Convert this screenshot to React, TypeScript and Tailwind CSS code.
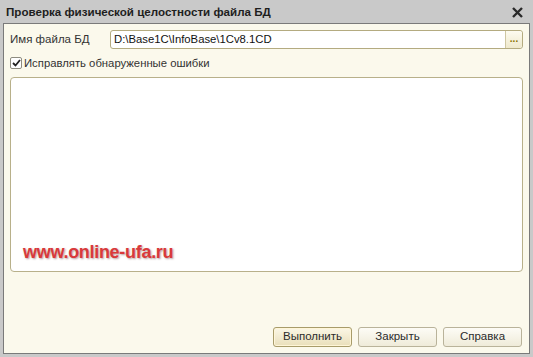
const font = { fontFamily: '"Liberation Sans", Arial, sans-serif' };

function Button({ label, bold }: { label: string; bold?: boolean }) {
  return (
    <button
      type="button"
      className={
        "flex h-[20px] w-[79px] items-center justify-center rounded-[3px] border text-[11.5px] text-[#2b2b2b] " +
        (bold
          ? "border-[#a89c6a] bg-gradient-to-b from-[#fbf7e6] to-[#e9dfba] shadow-[inset_0_0_0_1px_#fff6d8]"
          : "border-[#b9b39a] bg-gradient-to-b from-[#fdfcf6] to-[#efebd9]")
      }
    >
      {label}
    </button>
  );
}

export default function App() {
  return (
    <div
      style={font}
      className="flex h-[357px] w-[533px] flex-col bg-[#c9c9c9] px-[3px] pb-[3px]"
    >
      {/* Title bar */}
      <div className="flex h-[23px] shrink-0 items-center justify-between pl-[3px] pr-[6px]">
        <span className="text-[11.6px] font-bold text-[#1e1e1e]">
          Проверка физической целостности файла БД
        </span>
        <svg width="13" height="13" viewBox="0 0 13 13" className="mt-[1px]">
          <path d="M2 2 L11 11 M11 2 L2 11" stroke="#2a2a2a" strokeWidth="2.4" />
        </svg>
      </div>

      {/* Body */}
      <div className="flex flex-1 flex-col border border-[#7a7a7a] bg-[#fbf9ec] px-[6px] pt-[6px] pb-[6px]">
        <div className="flex h-[19px] items-center">
          <span className="w-[100px] text-[11.5px] text-[#333]">Имя файла БД</span>
          <div className="flex h-[19px] flex-1 items-stretch rounded-[3px] border border-[#b4ab80] bg-white">
            <span className="flex flex-1 items-center pl-[3px] text-[11.3px] text-[#111]">
              D:\Base1C\InfoBase\1Cv8.1CD
            </span>
            <span className="flex w-[17px] items-end justify-center rounded-r-[3px] border-l border-[#cfc7a2] bg-gradient-to-b from-[#fdfbf0] to-[#efe9cc] pb-[4px] text-[10px] font-bold leading-none text-[#8a7300]">
              ...
            </span>
          </div>
        </div>

        <label className="mt-[7px] flex h-[14px] items-center gap-[2px]">
          <span className="flex h-[12px] w-[12px] items-center justify-center rounded-[2px] border border-[#8e8c80] bg-white">
            <svg width="9" height="8" viewBox="0 0 9 8">
              <path d="M1 4 L3.5 6.5 L8 1" fill="none" stroke="#222" strokeWidth="1.8" />
            </svg>
          </span>
          <span className="text-[11.3px] text-[#333]">Исправлять обнаруженные ошибки</span>
        </label>

        <div className="mt-[7px] flex h-[195px] flex-col justify-end rounded-[4px] border border-[#b8b08a] bg-white pb-[5px] pl-[12px]">
          <span
            className="text-[18px] font-bold tracking-[-0.3px] text-[#d9393b]"
            style={{ textShadow: "1px 1px 2px rgba(90,40,40,0.45)" }}
          >
            www.online-ufa.ru
          </span>
        </div>

        <div className="mt-auto flex justify-end gap-[6px] pr-[1px]">
          <Button label="Выполнить" bold />
          <Button label="Закрыть" />
          <Button label="Справка" />
        </div>
      </div>
    </div>
  );
}
